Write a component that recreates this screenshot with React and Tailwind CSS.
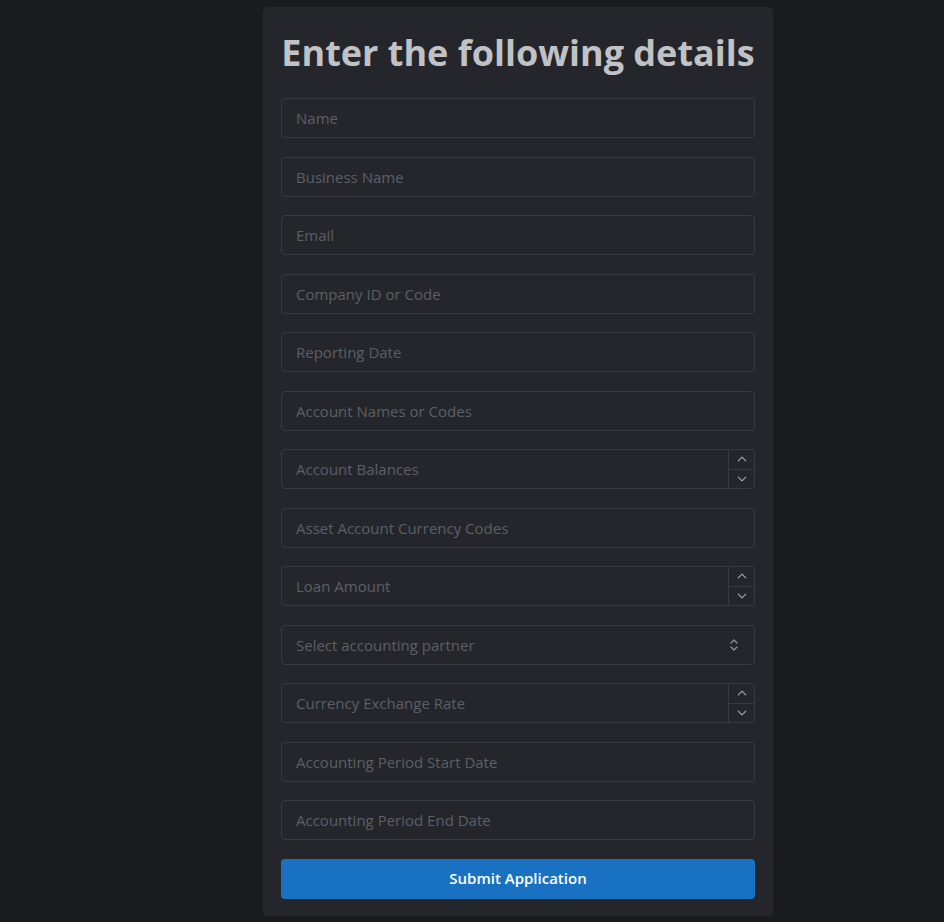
import React from 'react';

const fields = [
  { label: 'Name' },
  { label: 'Business Name' },
  { label: 'Email' },
  { label: 'Company ID or Code' },
  { label: 'Reporting Date' },
  { label: 'Account Names or Codes' },
  { label: 'Account Balances', type: 'number' },
  { label: 'Asset Account Currency Codes' },
  { label: 'Loan Amount', type: 'number' },
  { label: 'Select accounting partner', type: 'select' },
  { label: 'Currency Exchange Rate', type: 'number' },
  { label: 'Accounting Period Start Date' },
  { label: 'Accounting Period End Date' },
];

const Chevron = ({ up }) => (
  <svg width="14" height="14" viewBox="0 0 15 15" fill="none">
    <path
      d={up ? 'M3.5 9.5L7.5 5.5L11.5 9.5' : 'M3.5 5.5L7.5 9.5L11.5 5.5'}
      stroke="#a6a7ab"
      strokeWidth="1.2"
      strokeLinecap="round"
      strokeLinejoin="round"
    />
  </svg>
);

const Field = ({ label, type }) => (
  <div className="relative flex h-10 w-full rounded-[4px] border border-[#373a40] bg-[#25262b]">
    <input
      placeholder={label}
      className="h-full flex-1 bg-transparent pl-[14px] text-[15px] text-[#c1c2c5] outline-none placeholder:text-[#5c5f66]"
    />
    {type === 'number' && (
      <div className="flex w-[26px] flex-col border-l border-[#373a40]">
        <div className="flex flex-1 items-center justify-center border-b border-[#373a40]">
          <Chevron up />
        </div>
        <div className="flex flex-1 items-center justify-center">
          <Chevron />
        </div>
      </div>
    )}
    {type === 'select' && (
      <div className="flex w-10 items-center justify-center">
        <svg width="12" height="14" viewBox="0 0 12 14" fill="none">
          <path d="M3 5L6 2L9 5" stroke="#909296" strokeWidth="1.3" strokeLinecap="round" strokeLinejoin="round" />
          <path d="M3 9L6 12L9 9" stroke="#909296" strokeWidth="1.3" strokeLinecap="round" strokeLinejoin="round" />
        </svg>
      </div>
    )}
  </div>
);

export default function App() {
  return (
    <div
      className="min-h-[922px] bg-[#1a1b1e] pt-[7px]"
      style={{ fontFamily: '"Open Sans", "Noto Sans", sans-serif' }}
    >
      <div className="ml-[263px] w-[510px] rounded-[4px] bg-[#25262b] px-[18px] pb-[17px] pt-[22px]">
        {/* Heading */}
        <h1 className="mb-[21px] text-center text-[36px] font-bold leading-[48px] text-[#c1c2c5]">
          Enter the following details
        </h1>

        {/* Form fields */}
        <div className="flex flex-col gap-[18.5px]">
          {fields.map((f) => (
            <Field key={f.label} label={f.label} type={f.type} />
          ))}
          <button className="h-10 w-full rounded-[4px] bg-[#1971c2] text-[15px] font-semibold text-white">
            Submit Application
          </button>
        </div>
      </div>
    </div>
  );
}
